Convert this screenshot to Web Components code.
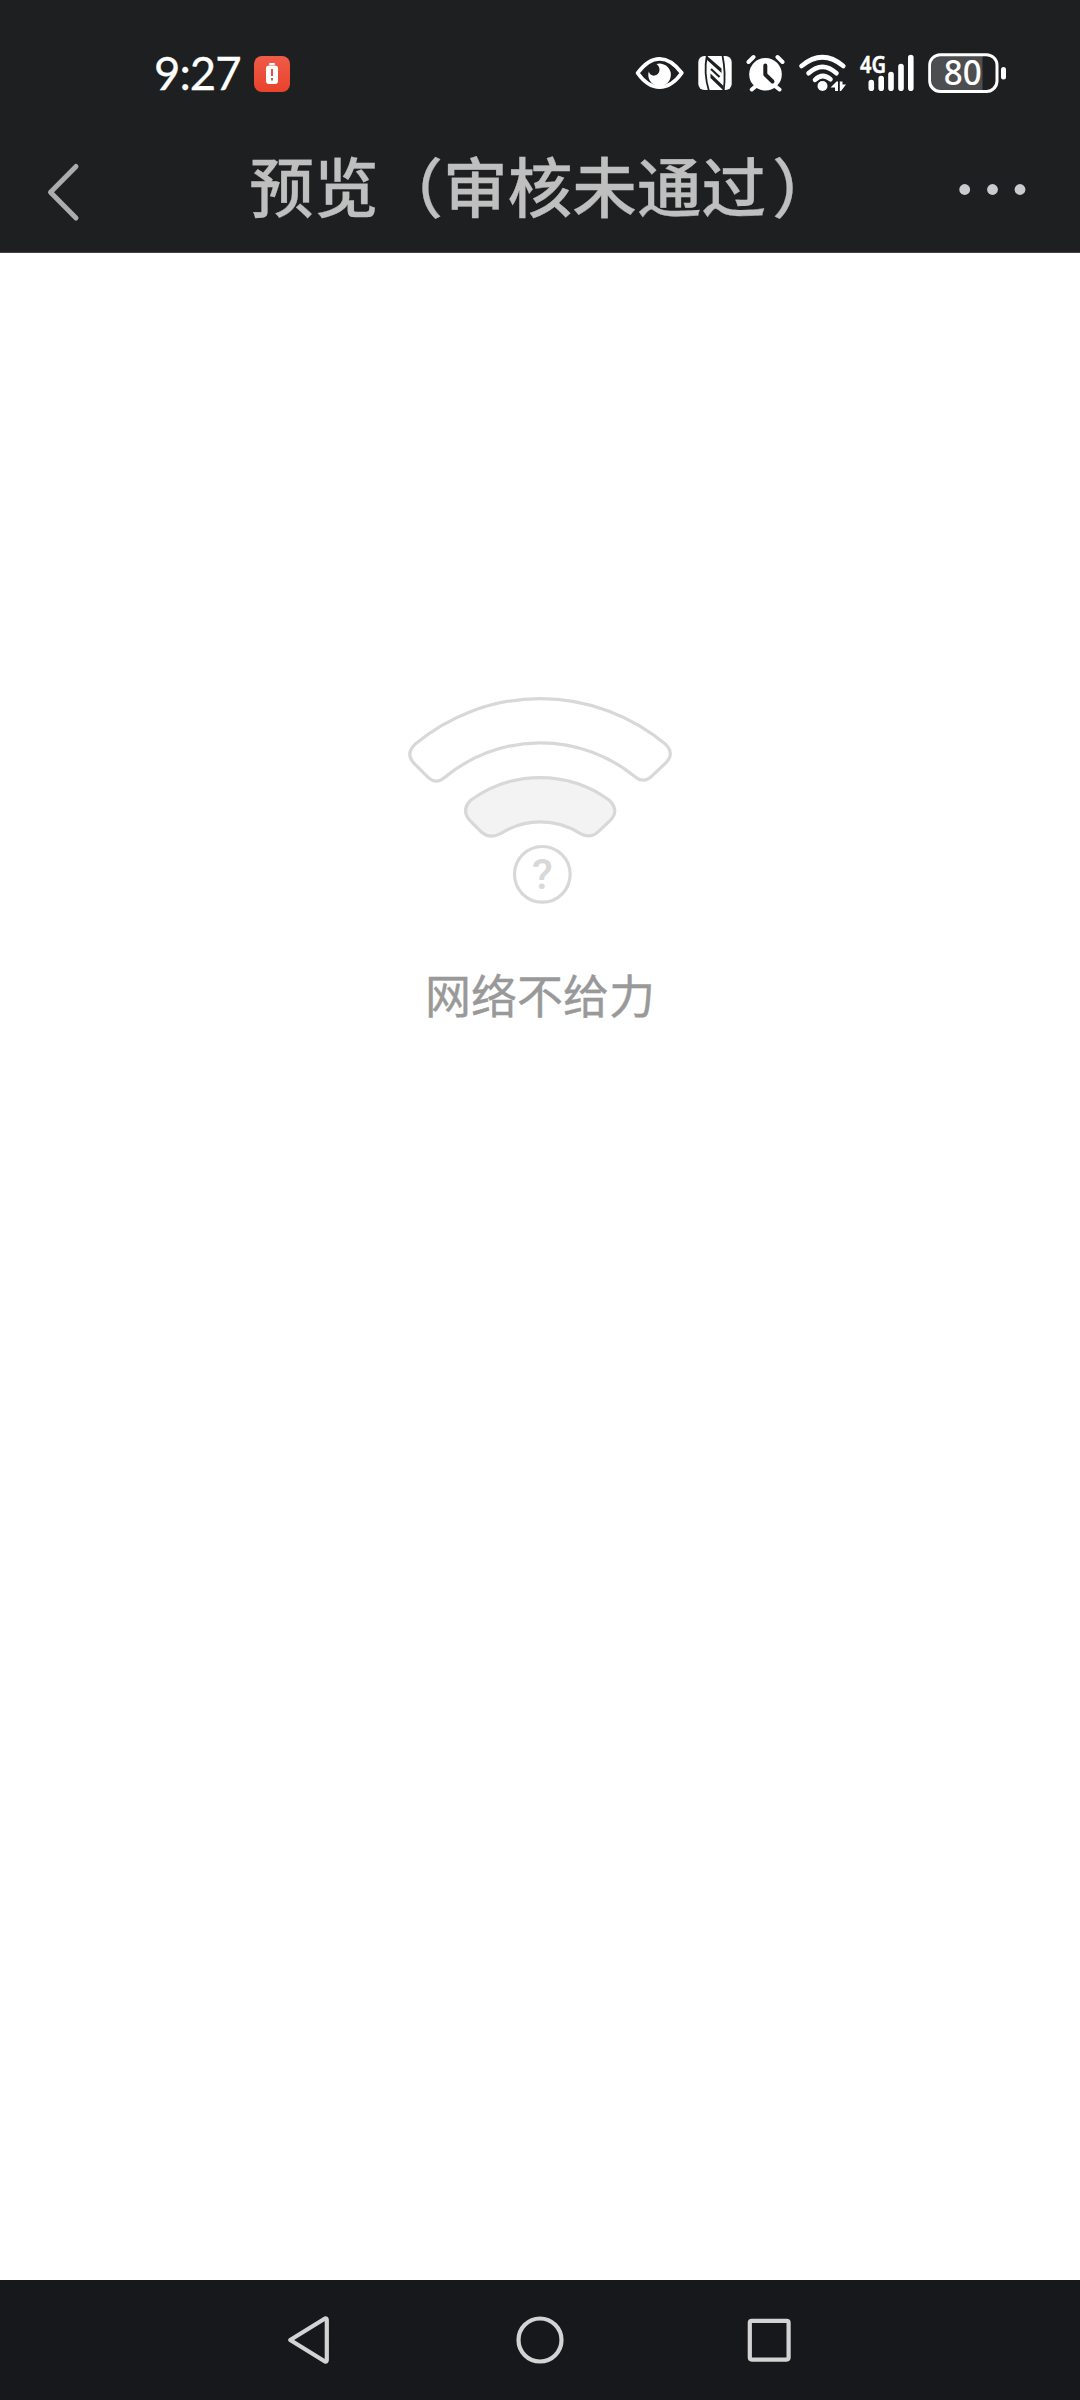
<!DOCTYPE html>
<html lang="zh-CN">
<head>
<meta charset="utf-8">
<title>预览</title>
<style>
html,body{margin:0;padding:0;background:#fff}
body{font-family:"Noto Sans CJK SC",sans-serif}
.close{display:inline-block;margin:0 -6px 0 6px}
</style>
</head>
<body>
<phone-screen>
  <status-bar slot="top" time="9:27" battery="80"></status-bar>
  <title-bar slot="top">预览（审核未通过<span class="close">）</span></title-bar>
  <network-empty>网络不给力</network-empty>
  <system-nav slot="bottom"></system-nav>
</phone-screen>
<script>
class Base extends HTMLElement{
  constructor(){
    super();
    this.attachShadow({mode:'open'}).innerHTML=this.render();
  }
}

customElements.define('phone-screen',class extends Base{
  render(){return `<style>
    :host{display:flex;flex-direction:column;width:1080px;height:2400px;overflow:hidden;background:#fff}
    main{flex:1;display:flex;flex-direction:column}
  </style><slot name="top"></slot><main><slot></slot></main><slot name="bottom"></slot>`}
});

customElements.define('status-bar',class extends Base{
  render(){return `<style>
    :host{display:flex;align-items:center;height:70px;padding:40px 64px 20px 154px;background:#1e1f21;color:#fff}
    svg{display:block;flex:none}
    .time{font:400 45.500px/66px Lato,sans-serif;width:100px;padding-bottom:4px;white-space:nowrap;letter-spacing:-1px;-webkit-text-stroke:.3px #fff}
    .gap{flex:1}
  </style>
  <span class="time">${this.getAttribute('time')}</span>
  <svg width="36" height="70" viewBox="254 40 36 70">
    <defs><linearGradient id="g" x2="0" y2="1"><stop stop-color="#ee5c48"/><stop offset="1" stop-color="#e9432b"/></linearGradient></defs>
    <rect x="254" y="56" width="36" height="36" rx="8" fill="url(#g)"/>
    <rect x="269" y="63" width="6" height="2" rx="1" fill="#fff"/>
    <rect x="266" y="65.5" width="12" height="18.5" rx="3" fill="#fff"/>
    <path d="M272 69v7M272 78v2.6" stroke="#e9503b" stroke-width="2"/>
  </svg>
  <span class="gap"></span>
  <svg width="60" height="70" viewBox="630 40 60 70">
    <path d="M637.6 73Q648 58.8 659.6 58.8T681.800 73Q671.500 87.200 659.600 87.200T637.600 73Z" fill="none" stroke="#fff" stroke-width="3.800" stroke-linejoin="round"/>
    <path d="M656.500 64A11.300 11.300 0 1 1 648.800 71.500Q650 76 654.500 75.600C660 75 661.500 67.500 656.500 64Z" fill="#fff"/>
  </svg>
  <svg width="50" height="70" viewBox="690 40 50 70">
    <rect x="698.300" y="56" width="33.400" height="34" rx="6" fill="#fff"/>
    <g fill="none" stroke="#1e1f21">
      <path d="M706.800 55.500Q703.500 73 708.800 90.500M722.500 55.500Q726 73 723.700 90.500" stroke-width="1.800"/>
      <path d="M711 69L719.500 77" stroke-width="2"/>
    </g>
    <path d="M706.500 55.500L721.500 68.500V73L706.500 59.500ZM710.500 73.500L723 85.500V90L710.500 78Z" fill="#1e1f21"/>
  </svg>
  <svg width="50" height="70" viewBox="740 40 50 70">
    <circle cx="765.500" cy="74.300" r="16.300" fill="#fff"/>
    <path d="M748.500 62L753.500 57M777.500 57L782.500 62M756 86L751.800 89.500M775 86L779.500 89.500" stroke="#fff" stroke-width="4" stroke-linecap="round"/>
    <path d="M765.300 65.500V74.500L772.500 81.500" fill="none" stroke="#1e1f21" stroke-width="4" stroke-linecap="round" stroke-linejoin="round"/>
  </svg>
  <svg width="63" height="70" viewBox="790 40 63 70">
    <path d="M801.500 66Q822.500 48.500 843.300 66M808.500 73.300Q822.500 60.500 836.500 73.300M815 79.800Q822.500 72.500 830.500 79.300" fill="none" stroke="#fff" stroke-width="4.600" stroke-linecap="round"/>
    <circle cx="822.500" cy="86" r="5" fill="#fff"/>
    <path d="M830.500 87.500L836.500 81.500H838V91H835V87.500ZM839.800 91V81.500H842.500V84.500H846L841 91Z" fill="#fff"/>
  </svg>
  <svg width="67" height="70" viewBox="853 40 67 70">
    <text x="860" y="72.500" font-family="Noto Sans" font-weight="600" font-size="23.500" textLength="26" lengthAdjust="spacingAndGlyphs" fill="#fff" stroke="#fff" stroke-width=".5">4G</text>
    <path d="M871.300 82.500V88.300M881.200 78.500V88.300M891 74.500V88.300M901 66.500V88.300M910.800 57.500V88.300" stroke="#fff" stroke-width="5.600" stroke-linecap="round"/>
  </svg>
  <svg width="96" height="70" viewBox="920 40 96 70">
    <path d="M939.500 56H982.500V90H939.500Q932 90 932 82V64Q932 56 939.500 56Z" fill="#4d4e50"/>
    <rect x="929.700" y="54.700" width="67.300" height="36.800" rx="10.500" fill="none" stroke="#fff" stroke-width="3"/>
    <rect x="1001" y="67" width="5" height="12.500" rx="2.500" fill="#fff"/>
    <text x="962.700" y="85.300" text-anchor="middle" font-family="Noto Sans" font-weight="500" font-size="34" textLength="38" lengthAdjust="spacingAndGlyphs" fill="#fff">${this.getAttribute('battery')}</text>
  </svg>`}
});

customElements.define('title-bar',class extends Base{
  render(){return `<style>
    :host{display:flex;height:122px;background:#1e1f21;color:#bfbfbf;border-bottom:1px solid #454243}
    svg{display:block;flex:none}
    h1{flex:1;margin:0;text-align:center;white-space:nowrap;font:500 64.600px/108px "Noto Sans CJK SC",sans-serif;-webkit-text-stroke:.3px #bfbfbf}
  </style>
  <svg width="140" height="122" viewBox="0 130 140 122"><path d="M76 166.500L50.500 192.200L76 218" fill="none" stroke="#acacac" stroke-width="5" stroke-linecap="round" stroke-linejoin="round"/></svg>
  <h1><slot></slot></h1>
  <svg width="140" height="122" viewBox="940 130 140 122" fill="#cacbce"><circle cx="964.700" cy="189.500" r="5.400"/><circle cx="992.500" cy="189.500" r="5.400"/><circle cx="1020" cy="189.500" r="5.400"/></svg>`}
});

customElements.define('network-empty',class extends Base{
  render(){return `<style>
    :host{display:flex;flex-direction:column;align-items:center;padding-top:427px;color:#999}
    svg{display:block}
    p{margin:39px 0 0;font:400 46px/68px "Noto Sans CJK SC",sans-serif;-webkit-text-stroke:.4px #999}
  </style>
  <svg width="300" height="240" viewBox="0 0 900 720" stroke="#d8d8d8" stroke-width="9.500" fill="none">
    <path d="M75 193A584 584 0 0 1 827 193Q855 222 827 249L787 287Q762 312 735 290A449 449 0 0 0 163 293Q138 315 112 290L73 251Q45 222 75 193Z"/>
    <path fill="#f3f3f3" d="M243 360A353 353 0 0 1 657 360Q690 392 660 422L625 455Q600 478 570 460A222 222 0 0 0 333 460Q300 478 275 457L240 422Q212 390 243 360Z"/>
    <circle cx="457" cy="583" r="83.500"/>
    <text x="457" y="627" text-anchor="middle" font-family="Roboto" font-weight="500" font-size="128" fill="#d8d8d8" stroke="none">?</text>
  </svg>
  <p><slot></slot></p>`}
});

customElements.define('system-nav',class extends Base{
  render(){return `<style>
    :host{display:flex;justify-content:center;gap:169px;height:120px;background:#17181b}
    svg{display:block}
  </style>
  <svg width="60" height="120" viewBox="281 2280 60 120" fill="none" stroke="#d3d3d3" stroke-width="4.200" stroke-linejoin="round"><path d="M290.200 2340L325 2318.500Q326.800 2318 326.800 2320V2360Q326.800 2362 325 2361.500Z"/></svg>
  <svg width="60" height="120" viewBox="510 2280 60 120" fill="none" stroke="#d3d3d3" stroke-width="4.200"><circle cx="540" cy="2340" r="21.500"/></svg>
  <svg width="60" height="120" viewBox="739 2280 60 120" fill="none" stroke="#d3d3d3" stroke-width="4.200"><rect x="749.800" y="2320.800" width="38.800" height="38.800" rx="2"/></svg>`}
});
</script>
</body>
</html>
